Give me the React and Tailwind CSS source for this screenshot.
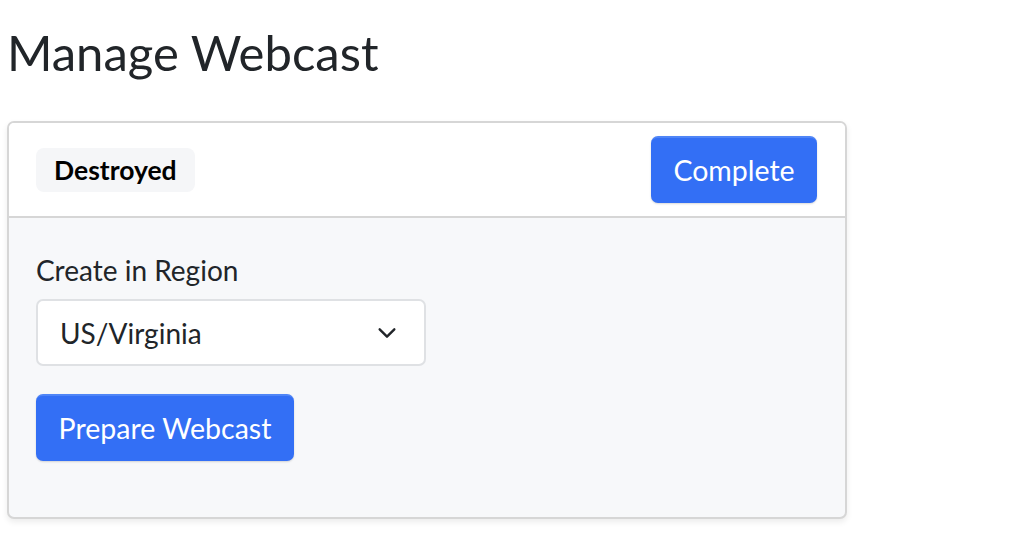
export default function App() {
  return (
    <div className="min-h-[557px] bg-white pl-[7px] pt-[24px] text-[#212529]" style={{ fontFamily: "Lato, 'Noto Sans', sans-serif" }}>
      <h1 className="m-0 text-[49px] leading-[56px] font-normal">Manage Webcast</h1>

      <div className="mt-[41px] w-[840px] overflow-hidden rounded-[7px] border-2 border-[#d6d6d6] bg-[#f7f8fa] shadow-[0_3px_6px_rgba(0,0,0,0.08)]">
        <div className="flex items-center justify-between border-b-2 border-[#d6d6d6] bg-white pl-[27px] pr-[28px] pt-[13px] pb-[13px]">
          <span className="rounded-[8px] bg-[#f5f6f8] px-[18px] py-[8px] text-[26.5px] leading-[28px] font-bold text-black">Destroyed</span>
          <button className="h-[67px] w-[166px] rounded-[7px] border-t-2 border-[#4f85f7] bg-[#336ff5] text-[28.5px] text-white shadow-[0_1px_2px_rgba(0,0,0,0.15)]">Complete</button>
        </div>

        <div className="px-[27px] pt-[36px] pb-[56px]">
          <label className="block text-[28px] leading-[32px]">Create in Region</label>
          <div className="mt-[13px] flex h-[67px] w-[390px] items-center justify-between rounded-[7px] border-2 border-[#dfe1e4] bg-white pl-[22px] pr-[26px] text-[28px]">
            <span>US/Virginia</span>
            <svg width="22" height="22" viewBox="0 0 24 24" fill="none" stroke="#212529" strokeWidth="2.6" strokeLinecap="round" strokeLinejoin="round">
              <path d="M4 8l8 8 8-8" />
            </svg>
          </div>
          <button className="mt-[28px] h-[67px] w-[258px] rounded-[7px] border-t-2 border-[#4f85f7] bg-[#336ff5] text-[28.5px] text-white shadow-[0_1px_2px_rgba(0,0,0,0.15)]">Prepare Webcast</button>
        </div>
      </div>
    </div>
  );
}
